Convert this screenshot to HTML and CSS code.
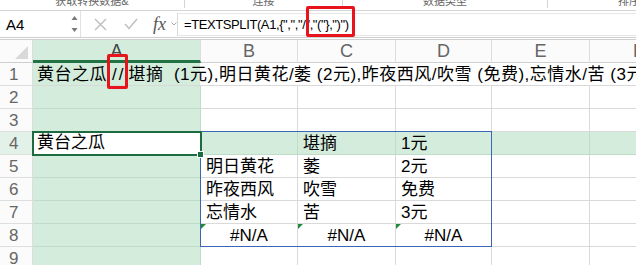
FILE: index.html
```html
<!DOCTYPE html>
<html lang="zh">
<head>
  <meta charset="UTF-8" />
  <title>TEXTSPLIT</title>
  <link rel="stylesheet" href="styles.css">
</head>
<body>
  <div class="ribbon">
    <div class="group g1">获取转换数据&amp;</div>
    <div class="group g2">连接</div>
    <div class="group g3">数据类型</div>
    <div class="group g4">排序</div>
  </div>

  <div class="formula-bar">
    <div class="name-box">
      <span class="ref">A4</span>
      <span class="spin">
        <svg width="7" height="18" viewBox="0 0 7 18"><path d="M0.5 5 L3.5 1 L6.5 5 Z M0.5 13 L3.5 17 L6.5 13 Z" fill="#777"/></svg>
      </span>
    </div>
    <div class="fx-tools">
      <svg class="tool" width="13" height="13" viewBox="0 0 13 13"><path d="M1 1 L12 12 M12 1 L1 12" stroke="#bdbdbd" stroke-width="1.4" fill="none"/></svg>
      <svg class="tool" width="14" height="12" viewBox="0 0 14 12"><path d="M1 6 L5 10.5 L13 1" stroke="#bdbdbd" stroke-width="1.4" fill="none"/></svg>
      <span class="fx">fx</span>
      <svg class="chev" width="6" height="4" viewBox="0 0 6 4"><path d="M0.5 0.5 L3 3 L5.5 0.5" stroke="#aaa" fill="none"/></svg>
    </div>
    <div class="formula">=TEXTSPLIT(A1,{",","/"<span class="mark">,"("},")")</span></div>
  </div>

  <div class="sheet">
    <div class="corner"><svg width="13" height="13" viewBox="0 0 13 13"><path d="M13 0 L13 13 L0 13 Z" fill="#d9d9d9"/></svg></div>
    <div class="col-head active">A</div>
    <div class="col-head">B</div>
    <div class="col-head">C</div>
    <div class="col-head">D</div>
    <div class="col-head">E</div>
    <div class="col-head">F</div>

    <div class="row-head">1</div>
    <div class="cell overflow">黄台之瓜<span class="mark-a">//</span>堪摘  (1元),明日黄花/萎 (2元),昨夜西风/吹雪 (免费),忘情水/苦 (3元)</div>

    <div class="row-head">2</div>
    <div class="cell focus"></div><div class="cell"></div><div class="cell"></div><div class="cell"></div><div class="cell"></div><div class="cell"></div>

    <div class="row-head">3</div>
    <div class="cell focus"></div><div class="cell"></div><div class="cell"></div><div class="cell"></div><div class="cell"></div><div class="cell"></div>

    <div class="row-head focus">4</div>
    <div class="cell selected">黄台之瓜</div><div class="cell focus"></div><div class="cell focus">堪摘</div><div class="cell focus">1元</div><div class="cell focus"></div><div class="cell focus"></div>

    <div class="row-head">5</div>
    <div class="cell focus"></div><div class="cell">明日黄花</div><div class="cell">萎</div><div class="cell">2元</div><div class="cell"></div><div class="cell"></div>

    <div class="row-head">6</div>
    <div class="cell focus"></div><div class="cell">昨夜西风</div><div class="cell">吹雪</div><div class="cell">免费</div><div class="cell"></div><div class="cell"></div>

    <div class="row-head">7</div>
    <div class="cell focus"></div><div class="cell">忘情水</div><div class="cell">苦</div><div class="cell">3元</div><div class="cell"></div><div class="cell"></div>

    <div class="row-head">8</div>
    <div class="cell focus"></div><div class="cell error">#N/A</div><div class="cell error">#N/A</div><div class="cell error">#N/A</div><div class="cell"></div><div class="cell"></div>

    <div class="row-head">9</div>
    <div class="cell focus"></div><div class="cell"></div><div class="cell"></div><div class="cell"></div><div class="cell"></div><div class="cell"></div>

    <div class="spill"></div>
  </div>
</body>
</html>
```
FILE: styles.css
```css
body {
  margin: 0;
  width: 636px;
  height: 265px;
  overflow: hidden;
  background: #fff;
  font-family: "Liberation Sans", "Noto Sans CJK SC", sans-serif;
  color: #000;
  position: relative;
}

/* ribbon group labels, cut off at the top */
.ribbon {
  display: flex;
  align-items: flex-end;
  height: 10px;
  overflow: hidden;
  border-bottom: 1px solid #d4d4d4;
}

.group {
  flex: none;
  text-align: center;
  font-size: 11px;
  line-height: 13px;
  color: #666;
  border-right: 1px solid #d4d4d4;
  white-space: nowrap;
  margin-bottom: 2px;
}

.g1 { width: 184px; }
.g2 { width: 157px; }
.g3 { width: 204px; }
.g4 { width: 162px; border-right: none; }

/* formula bar */
.formula-bar {
  display: flex;
  height: 26px;
  border-bottom: 3px double #cfcfcf;
}

.name-box {
  width: 81px;
  display: flex;
  align-items: center;
  justify-content: space-between;
  padding: 0 2px 0 6px;
  box-sizing: border-box;
  border-right: 1px solid #e2e2e2;
}

.ref {
  font-size: 15px;
}

.spin {
  display: flex;
}

.fx-tools {
  width: 96px;
  display: flex;
  align-items: center;
  padding-left: 13px;
  box-sizing: border-box;
}

.tool {
  margin-right: 17px;
}

.fx {
  font-family: "Liberation Serif", serif;
  font-style: italic;
  font-size: 18px;
  color: #555;
  margin-left: -2px;
  margin-right: 5px;
}

.formula {
  flex: 1;
  margin: 2px 0 1px 0;
  border-left: 1px solid #d8d8d8;
  border-top: 1px solid #e6e6e6;
  border-bottom: 1px solid #e6e6e6;
  padding-left: 6px;
  font-size: 13px;
  letter-spacing: -0.4px;
  line-height: 21px;
  white-space: nowrap;
}

.mark {
  position: relative;
}

.mark::after {
  content: "";
  position: absolute;
  left: -4px;
  right: -6px;
  top: -11px;
  bottom: -5px;
  border: 3px solid #e8141b;
  border-radius: 2px;
}

/* sheet grid */
.sheet {
  display: grid;
  grid-template-columns: 33px 168px 97px 98px 96px 98px 98px;
  grid-auto-rows: 23px;
  position: relative;
  font-size: 17px;
}

.corner,
.col-head {
  background: #fbfbfb;
  border-right: 1px solid #dedede;
  border-bottom: 1px solid #cfcfcf;
  box-sizing: border-box;
}

.corner {
  display: flex;
  align-items: flex-end;
  justify-content: flex-end;
  padding: 0 4px 3px 0;
}

.col-head {
  text-align: center;
  color: #666;
  font-size: 18px;
  line-height: 23px;
}

.col-head.active {
  background: #d3ecdc;
  border-bottom: 3px solid #217346;
  color: #444;
}

.row-head {
  background: #fbfbfb;
  color: #666;
  font-size: 17px;
  line-height: 23px;
  padding-left: 9px;
  border-right: 1px solid #dedede;
  border-bottom: 1px solid #dedede;
  box-sizing: border-box;
}

.row-head.focus {
  background: #e3f2e8;
}

.cell {
  border-right: 1px solid #d9d9d9;
  border-bottom: 1px solid #d9d9d9;
  box-sizing: border-box;
  padding-left: 5px;
  line-height: 23px;
  white-space: nowrap;
}

.cell.focus {
  background: #d3ecdc;
  border-color: #bfdcc9;
}

.overflow {
  grid-column: 2 / -1;
  padding-left: 4px;
  white-space: pre;
  letter-spacing: 0.5px;
  background: linear-gradient(to right, #d3ecdc 167px, #fff 167px);
  position: relative;
}

.mark-a {
  position: relative;
  padding: 0 3px 0 5px;
  letter-spacing: 2px;
}

.mark-a::after {
  content: "";
  position: absolute;
  left: 0;
  right: 0;
  top: -11px;
  bottom: -5px;
  border: 3px solid #e8141b;
  border-radius: 2px;
}

.selected {
  position: relative;
  z-index: 1;
  border: none;
  padding-left: 4px;
  outline: 2px solid #1d6b40;
  outline-offset: -1px;
  line-height: 22px;
}

.selected::after {
  content: "";
  position: absolute;
  right: -3px;
  bottom: -3px;
  width: 5px;
  height: 5px;
  background: #1d6b40;
  border: 1px solid #fff;
}

.error {
  position: relative;
  text-align: center;
  padding-left: 0;
}

.error::before {
  content: "";
  position: absolute;
  left: 0;
  top: 0;
  border-top: 5px solid #1f8a3a;
  border-right: 5px solid transparent;
}

/* spill range outline, laid over B4:D8 */
.spill {
  grid-row: 5 / 10;
  grid-column: 3 / 6;
  position: absolute;
  top: -1px;
  left: -1px;
  right: 0;
  bottom: 0;
  border: 1px solid #3c66b5;
  pointer-events: none;
}
```
